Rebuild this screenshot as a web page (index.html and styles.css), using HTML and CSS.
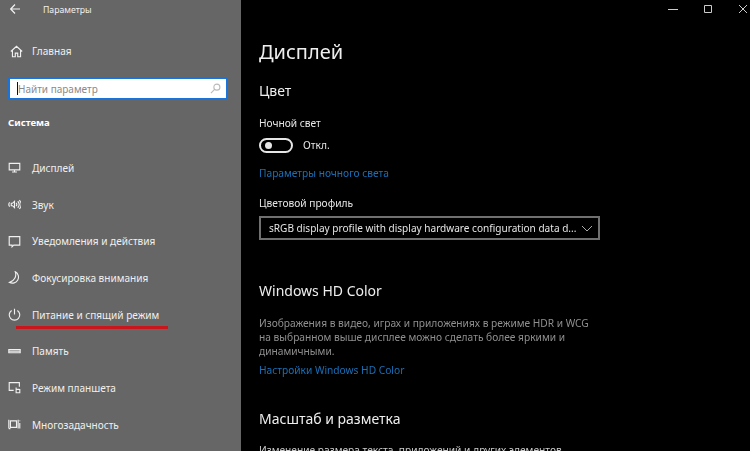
FILE: index.html
```html
<!DOCTYPE html>
<html lang="ru">
<head>
<meta charset="utf-8">
<title>Параметры</title>
<link rel="stylesheet" href="styles.css">
</head>
<body>
<div class="window">
  <aside class="sidebar">
    <div class="titlebar">
      <svg class="back" width="10" height="10" viewBox="0 0 10 10"><path d="M5 .5.7 5 5 9.500M.7 5H10"/></svg>
      <span class="apptitle">Параметры</span>
    </div>
    <div class="home row">
      <svg class="icon" viewBox="0 0 16 16"><path d="M1 8 8 1.500 15 8M3 6.500V14.500H6.500V10H9.500V14.500H13V6.500"/></svg>
      <span>Главная</span>
    </div>
    <div class="search">
      <i class="caret"></i><span class="placeholder">Найти параметр</span>
      <svg class="find" viewBox="0 0 12 12"><circle cx="7.500" cy="4.500" r="3.300"/><path d="M5 7 1 11"/></svg>
    </div>
    <div class="section">Система</div>
    <nav class="nav">
      <div class="row">
        <svg class="icon" viewBox="0 0 16 16"><path d="M1.500 3H14.500V11H1.500ZM8 11V13.500M5 13.500H11"/></svg>
        <span>Дисплей</span>
      </div>
      <div class="row">
        <svg class="icon" viewBox="0 0 16 16"><path d="M2 5.500a4 4 0 0 0 0 5M4 6.500H5.500L8 4V12L5.500 9.500H4ZM10 6a3 3 0 0 1 0 4M12 4a6 6 0 0 1 0 8M14 2.500a8.500 8.500 0 0 1 0 11"/></svg>
        <span>Звук</span>
      </div>
      <div class="row">
        <svg class="icon" viewBox="0 0 16 16"><path d="M1.500 2H14.500V12.500H7L5 14.500V12.500H1.500Z"/></svg>
        <span>Уведомления и действия</span>
      </div>
      <div class="row">
        <svg class="icon" viewBox="0 0 16 16"><path d="M9 1A7 7 0 0 1 2 14 10 10 0 0 0 9 1Z"/></svg>
        <span>Фокусировка внимания</span>
      </div>
      <div class="row current">
        <svg class="icon" viewBox="0 0 16 16"><path d="M8 1V8M4.500 3a6.500 6.500 0 1 0 7 0"/></svg>
        <span>Питание и спящий режим</span>
        <i class="underline"></i>
      </div>
      <div class="row">
        <svg class="icon" viewBox="0 0 16 16"><path d="M1 5.500H15V9.500H1ZM1 7.500H15"/></svg>
        <span>Память</span>
      </div>
      <div class="row">
        <svg class="icon" viewBox="0 0 16 16"><path d="M7 11.500H1.500V2H14V7M10 8V14.500H14.500V10.500L10 10"/></svg>
        <span>Режим планшета</span>
      </div>
      <div class="row">
        <svg class="icon" viewBox="0 0 16 16"><path d="M3 3.500H10.500V11.500H3ZM1 2V13M12.500 2V13M1 13H3M14.500 3V4M14.500 6V13"/></svg>
        <span>Многозадачность</span>
      </div>
    </nav>
  </aside>
  <main class="main">
    <div class="controls">
      <svg width="10" height="10" viewBox="0 0 10 10"><path d="M0 5.500H10"/></svg>
      <svg width="10" height="10" viewBox="0 0 10 10"><path d="M1.500 1.500H8.500V8.500H1.500Z"/></svg>
      <svg width="10" height="10" viewBox="0 0 10 10"><path d="M1 1 9 9M9 1 1 9"/></svg>
    </div>
    <div class="content">
      <h1>Дисплей</h1>
      <h2 class="h-color">Цвет</h2>
      <p class="label night">Ночной свет</p>
      <div class="toggle-row">
        <span class="toggle"><i class="knob"></i></span>
        <span>Откл.</span>
      </div>
      <a class="link night-link">Параметры ночного света</a>
      <p class="label profile">Цветовой профиль</p>
      <div class="select">
        <span class="select-text">sRGB display profile with display hardware configuration data d...</span>
        <svg width="12" height="7" viewBox="0 0 12 7"><path d="M1 1 6 6 11 1"/></svg>
      </div>
      <h2 class="h-hd">Windows HD Color</h2>
      <p class="desc">Изображения в видео, играх и приложениях в режиме HDR и WCG на выбранном выше дисплее можно сделать более яркими и динамичными.</p>
      <a class="link hd-link">Настройки Windows HD Color</a>
      <h2 class="h-scale">Масштаб и разметка</h2>
      <p class="cut">Изменение размера текста, приложений и других элементов</p>
    </div>
  </main>
</div>
</body>
</html>
```
FILE: styles.css
```css
* { box-sizing: border-box; }
html, body { margin: 0; height: 100%; background: #000; }
body { font-family: "Noto Sans", "Open Sans", sans-serif; font-size: 10.2px; overflow: hidden; }
.window { display: flex; width: 750px; height: 451px; overflow: hidden; filter: blur(.35px); }
svg { fill: none; stroke: currentColor; flex: none; display: block; }

.sidebar { width: 241px; flex: none; background: #666; color: #f0f0f0; font-size: 10.050px; }
.titlebar { display: flex; align-items: center; height: 17px; padding-left: 10px; }
.back { stroke-width: 1.2; }
.apptitle { margin: 2px 0 0 23px; font-size: 8.700px; }
.row { display: flex; align-items: center; height: 36.700px; padding-left: 8px; position: relative; }
.home.row { height: 20px; margin-top: 24px; padding-left: 10px; }
.icon { width: 13px; height: 13px; stroke-width: 1.4; margin-right: 11px; }
.home .icon { margin-right: 9px; }
.search { display: flex; align-items: center; width: 220px; height: 23px; margin: 16px 0 0 8px; padding: 0 5px 0 7px; background: #fff; border: 2px solid #1a73d8; color: #8a8a8a; font-size: 10px; }
.caret { width: 1px; height: 13px; background: #111; flex: none; }
.placeholder { flex: 1; }
.find { width: 11px; height: 11px; stroke: #bbb; stroke-width: 1.2; }
.section { margin: 15px 0 0 8px; font-weight: 700; font-size: 9.600px; color: #fff; line-height: 16px; }
.nav { margin-top: 18.500px; }
.underline { position: absolute; left: 16px; top: 30px; width: 152px; height: 2.500px; background: #c8161c; }

.main { flex: 1; position: relative; color: #e6e6e6; min-width: 0; }
.controls { display: flex; justify-content: flex-end; gap: 25px; padding: 4px 2px 0 0; height: 19px; color: #ccc; }
.content { padding-left: 18px; width: 350px; }
h1 { margin: 19px 0 0; font-size: 20px; font-weight: 400; line-height: 28px; color: #eee; }
h2 { margin: 0; font-size: 14px; font-weight: 400; line-height: 20px; color: #eee; }
.h-color { margin-top: 15px; }
.label { margin: 0; line-height: 16px; }
.night { margin-top: 14px; }
.toggle-row { display: flex; align-items: center; gap: 10px; margin-top: 6px; height: 16px; }
.toggle { display: flex; align-items: center; width: 34px; height: 15px; padding-left: 4px; border: 2px solid #e6e6e6; border-radius: 8px; }
.knob { width: 7px; height: 7px; border-radius: 50%; background: #e6e6e6; }
.link { display: block; color: #1a70b8; line-height: 16px; }
.night-link { margin-top: 12px; }
.profile { margin-top: 14px; }
.select { display: flex; align-items: center; justify-content: space-between; width: 341px; height: 24px; margin-top: 5px; padding: 0 5px 0 8px; border: 2px solid #707070; white-space: nowrap; }
.select-text { font-size: 10.070px; }
.select svg { stroke: #aaa; }
.h-hd { margin-top: 41px; }
.desc { margin: 15px 0 0; line-height: 14px; color: #8f8f8f; }
.hd-link { margin-top: 3.500px; }
.h-scale { margin-top: 31px; }
.cut { margin: 14px 0 0; color: #ccc; white-space: nowrap; }
```
